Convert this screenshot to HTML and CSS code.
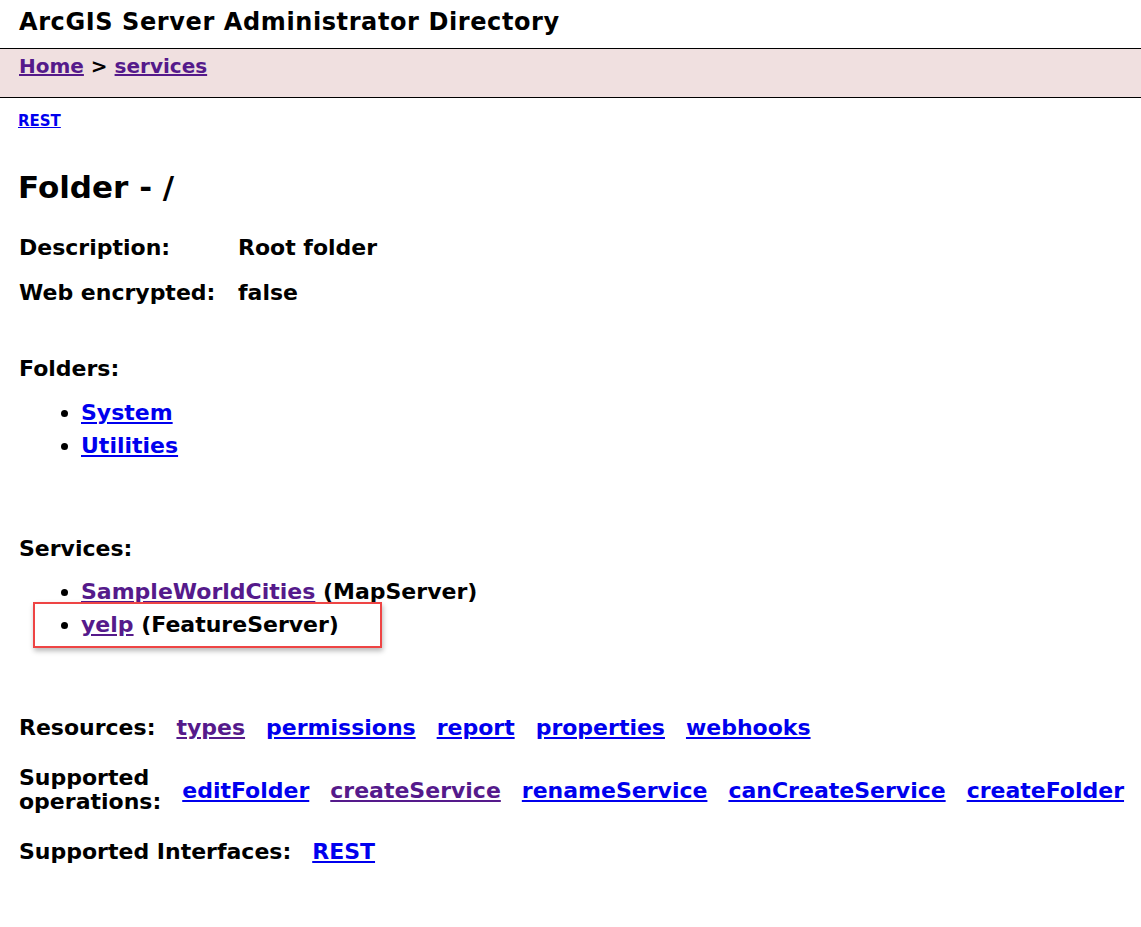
FILE: index.html
```html
<!DOCTYPE html>
<html>
<head>
<meta charset="utf-8">
<title>ArcGIS Server Administrator Directory</title>
<link rel="stylesheet" href="styles.css">
</head>
<body>
<div class="title">ArcGIS Server Administrator Directory</div>
<div class="crumbs"><a class="visited" href="#">Home</a> &gt; <a class="visited" href="#">services</a></div>
<div class="main">
  <div class="api"><a href="#">REST</a></div>
  <h2 class="folder">Folder - /</h2>
  <div class="props">
    <div class="prop-label">Description:</div><div class="prop-value">Root folder</div>
    <div class="prop-label">Web encrypted:</div><div class="prop-value">false</div>
  </div>
  <div class="section-title folders-title">Folders:</div>
  <ul class="list folders-list">
    <li><a href="#">System</a></li>
    <li><a href="#">Utilities</a></li>
  </ul>
  <div class="section-title services-title">Services:</div>
  <ul class="list services-list">
    <li><a class="visited" href="#">SampleWorldCities</a> (MapServer)</li>
    <li class="highlight"><a class="visited" href="#">yelp</a> (FeatureServer)</li>
  </ul>
  <div class="links-row resources">
    <span class="links-label">Resources:</span>
    <a class="visited" href="#">types</a>
    <a href="#">permissions</a>
    <a href="#">report</a>
    <a href="#">properties</a>
    <a href="#">webhooks</a>
  </div>
  <div class="links-row operations">
    <span class="links-label ops-label">Supported<br>operations:</span>
    <a href="#">editFolder</a>
    <a class="visited" href="#">createService</a>
    <a href="#">renameService</a>
    <a href="#">canCreateService</a>
    <a href="#">createFolder</a>
  </div>
  <div class="links-row interfaces">
    <span class="links-label">Supported Interfaces:</span>
    <a href="#">REST</a>
  </div>
</div>
</body>
</html>
```

FILE: styles.css
```css
html, body {
  margin: 0;
  padding: 0;
  background: #fff;
}
body {
  font-family: "DejaVu Sans", Verdana, sans-serif;
  font-weight: bold;
  color: #000;
}
a {
  color: #0000ee;
  text-decoration: underline;
}
a.visited {
  color: #551a8b;
}
.title {
  font-size: 24px;
  letter-spacing: 0.6px;
  height: 48px;
  line-height: 45px;
  padding-left: 19px;
}
.crumbs {
  border-top: 1px solid #000;
  border-bottom: 1px solid #000;
  background: #f0e0e0;
  height: 48px;
  box-sizing: content-box;
  padding-left: 19px;
  font-size: 20px;
  line-height: 34px;
}
.main {
  padding-left: 18px;
  font-size: 22px;
}
.api {
  font-size: 15px;
  margin-top: 13px;
  line-height: 20px;
}
.folder {
  font-size: 31px;
  margin: 38px 0 0 0;
  line-height: 36px;
}
.props {
  display: grid;
  grid-template-columns: 219px auto;
  row-gap: 20px;
  margin-top: 30px;
  line-height: 25px;
  padding-left: 1px;
}
.section-title {
  line-height: 25px;
  padding-left: 1px;
}
.folders-title {
  margin-top: 51px;
}
.services-title {
  margin-top: 74px;
}
.list {
  margin: 0;
  padding-left: 63px;
  line-height: 33px;
}
.folders-list {
  margin-top: 15px;
}
.services-list {
  margin-top: 14px;
}
.highlight {
  position: relative;
}
.highlight::before {
  content: "";
  position: absolute;
  left: -48px;
  top: -6px;
  width: 345px;
  height: 42px;
  border: 2px solid #ee4444;
  box-shadow: 1px 3px 5px rgba(0,0,0,0.28);
  pointer-events: none;
}
.links-row {
  display: flex;
  align-items: center;
  gap: 21px;
  padding-left: 1px;
  line-height: 25px;
}
.resources {
  margin-top: 74px;
}
.operations {
  margin-top: 26px;
}
.ops-label {
  line-height: 24px;
}
.interfaces {
  margin-top: 25px;
}
```
